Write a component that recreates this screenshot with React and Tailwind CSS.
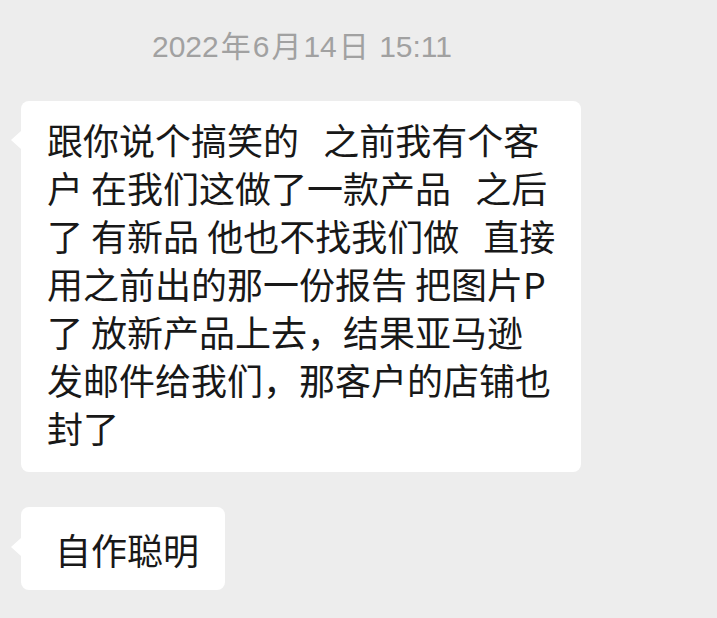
import React from 'react';

const cjk = { fontFamily: '"Noto Sans CJK SC", "Noto Sans", sans-serif' };
const stamp = { fontFamily: '"Liberation Sans", "Noto Sans CJK SC", sans-serif' };

const S1 = '\u00a0';
const S3 = '\u00a0\u00a0\u00a0';

const lines = [
  `跟你说个搞笑的${S3}之前我有个客`,
  `户${S1}在我们这做了一款产品${S3}之后`,
  `了${S1}有新品${S1}他也不找我们做${S3}直接`,
  `用之前出的那一份报告${S1}把图片P`,
  `了${S1}放新产品上去，结果亚马逊`,
  '发邮件给我们，那客户的店铺也',
  '封了',
];

const Bubble = ({ children, className, tailTop }) => (
  <div className={`relative bg-white rounded-lg ${className}`}>
    <span className={`absolute -left-[10px] ${tailTop} w-0 h-0 border-y-[9px] border-y-transparent border-r-[10px] border-r-white`} />
    {children}
  </div>
);

export default function App() {
  return (
    <div className="w-[717px] h-[618px] bg-[#ededed] overflow-hidden" style={cjk}>
      <div className="pt-[28px] pl-[152px] text-[30px] leading-[38px] text-[#a1a1a1] whitespace-pre" style={stamp}>
        2022<span className="px-[2px]">年</span>6<span className="px-[2px]">月</span>14<span className="px-[2px]">日</span> 15:11
      </div>
      <div className="pl-[21px] pt-[35px] flex flex-col items-start gap-[35px]">
        <Bubble className="w-[560px] pl-[26px] pt-[14px] pb-[21px]" tailTop="top-[30px]">
          <div className="text-[36px] leading-[48px] text-[#181818] whitespace-pre">
            {lines.map((l, i) => (
              <div key={i}>{l}</div>
            ))}
          </div>
        </Bubble>
        <Bubble className="w-[204px] h-[83px] pl-[34px] flex items-center" tailTop="top-[31px]">
          <span className="text-[36px] leading-[48px] text-[#181818]">自作聪明</span>
        </Bubble>
      </div>
    </div>
  );
}
